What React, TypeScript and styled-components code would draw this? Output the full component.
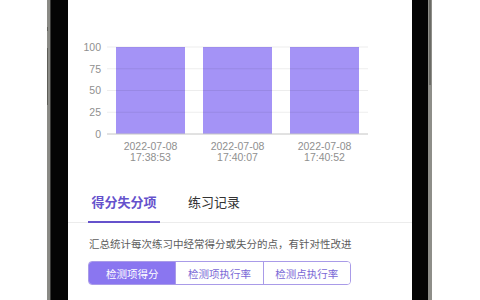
import React, { useState } from "react";
import styled, { createGlobalStyle } from "styled-components";

const Global = createGlobalStyle`
  html, body { margin: 0; padding: 0; background: #fff; }
  body { font-family: "Liberation Sans", "Noto Sans CJK SC", sans-serif; }
`;

const Stage = styled.div`
  width: 480px;
  height: 300px;
  overflow: hidden;
  display: flex;
  padding-left: 47px;
  box-sizing: border-box;
  background: #fff;
`;

const LeftBezel = styled.div`
  position: relative;
  width: 18px;
  height: 100%;
  background: #050505;
  border-left: 3px solid #8a8a85;
  box-shadow: inset 1px 0 0 #3a3a38;
`;

const SideButton = styled.div<{ $top: number; $h: number }>`
  position: absolute;
  left: -3px;
  top: ${(p) => p.$top}px;
  width: 1px;
  height: ${(p) => p.$h}px;
  background: #5e5e58;
`;

const RightBezel = styled.div`
  position: relative;
  width: 16px;
  height: 100%;
  background: #050505;
  border-right: 4px solid #8e8e89;
`;

const RightButton = styled.div`
  position: absolute;
  right: -3px;
  top: 0;
  width: 2px;
  height: 85px;
  background: #6b6b66;
`;

const Screen = styled.div`
  width: 344px;
  height: 100%;
  background: #fff;
  display: flex;
  flex-direction: column;
`;

const ChartBox = styled.div`
  height: 172px;
`;

const TabBar = styled.div`
  height: 50px;
  display: flex;
  align-items: stretch;
  gap: 18px;
  padding-left: 20px;
  border-bottom: 1px solid #ececec;
`;

const Tab = styled.div<{ $active: boolean }>`
  width: 72px;
  display: flex;
  align-items: center;
  justify-content: center;
  padding-top: 10px;
  box-sizing: border-box;
  font-size: 13px;
  font-weight: ${(p) => (p.$active ? 700 : 400)};
  color: ${(p) => (p.$active ? "#6552cc" : "#333")};
  border-bottom: 2px solid ${(p) => (p.$active ? "#6552cc" : "transparent")};
  margin-bottom: -1px;
  cursor: pointer;
`;

const Desc = styled.div`
  padding: 14px 0 0 21px;
  font-size: 10.5px;
  line-height: 14px;
  color: #5c5c5c;
`;

const Segments = styled.div`
  margin: 10px 0 0 20px;
  display: flex;
  width: 263px;
  height: 24px;
  border: 1px solid #a99be8;
  border-radius: 4px;
  overflow: hidden;
  box-sizing: border-box;
`;

const Segment = styled.div<{ $active: boolean }>`
  flex: 1;
  display: flex;
  align-items: center;
  justify-content: center;
  font-size: 10.5px;
  color: ${(p) => (p.$active ? "#fff" : "#7a68d6")};
  background: ${(p) => (p.$active ? "#8a76f0" : "#fff")};
  & + & {
    border-left: 1px solid #a99be8;
  }
`;

const ChartText = styled.text`
  font-family: "Liberation Sans", sans-serif;
  font-size: 10.5px;
  fill: #8f8f8f;
`;

const yTicks = [100, 75, 50, 25, 0];
const bars = [
  { d: "2022-07-08", t: "17:38:53" },
  { d: "2022-07-08", t: "17:40:07" },
  { d: "2022-07-08", t: "17:40:52" },
];

function Chart() {
  const top = 47;
  const bottom = 134;
  const left = 39;
  const right = 300;
  const band = (right - left) / bars.length;
  const bw = 69;
  return (
    <svg width={344} height={172} viewBox="0 0 344 172">
      {bars.map((b, i) => {
        const cx = left + band * i + band / 2;
        return (
          <g key={i}>
            <rect x={cx - bw / 2} y={top} width={bw} height={bottom - top} fill="#a493f6" />
            <ChartText x={cx} y={150} textAnchor="middle">{b.d}</ChartText>
            <ChartText x={cx} y={161} textAnchor="middle">{b.t}</ChartText>
          </g>
        );
      })}
      {yTicks.map((v, i) => {
        const y = top + ((bottom - top) * i) / (yTicks.length - 1);
        return (
          <g key={v}>
            <line x1={left} x2={right} y1={y} y2={y} stroke={v === 0 ? "#c4c4c4" : "rgba(0,0,0,0.07)"} strokeWidth={1} />
            <ChartText x={33} y={y + 3.8} textAnchor="end">{v}</ChartText>
          </g>
        );
      })}
    </svg>
  );
}

export default function App() {
  const [tab, setTab] = useState(0);
  const [seg, setSeg] = useState(0);
  const segs = ["检测项得分", "检测项执行率", "检测点执行率"];
  return (
    <Stage>
      <Global />
      <LeftBezel>
        <SideButton $top={27} $h={4} />
        <SideButton $top={48} $h={57} />
      </LeftBezel>
      <Screen>
        <ChartBox>
          <Chart />
        </ChartBox>
        <TabBar>
          {["得分失分项", "练习记录"].map((t, i) => (
            <Tab key={t} $active={tab === i} onClick={() => setTab(i)}>
              {t}
            </Tab>
          ))}
        </TabBar>
        <Desc>汇总统计每次练习中经常得分或失分的点，有针对性改进</Desc>
        <Segments>
          {segs.map((s, i) => (
            <Segment key={s} $active={seg === i} onClick={() => setSeg(i)}>
              {s}
            </Segment>
          ))}
        </Segments>
      </Screen>
      <RightBezel>
        <RightButton />
      </RightBezel>
    </Stage>
  );
}
